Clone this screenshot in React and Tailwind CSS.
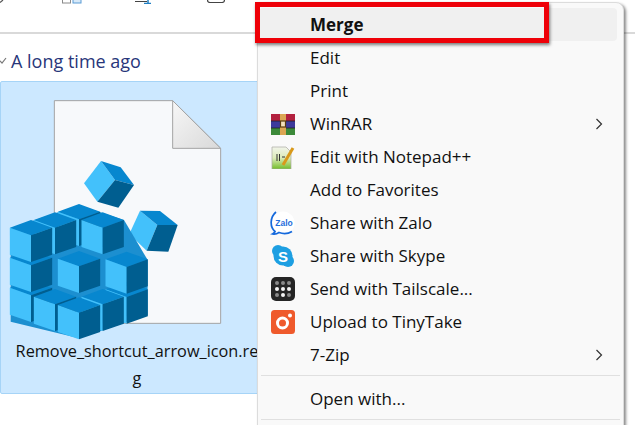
const menuItems = [
  { label: 'Edit' },
  { label: 'Print' },
  { label: 'WinRAR', icon: <WinRarIcon />, more: true },
  { label: 'Edit with Notepad++', icon: <NotepadIcon /> },
  { label: 'Add to Favorites' },
  { label: 'Share with Zalo', icon: <ZaloIcon /> },
  { label: 'Share with Skype', icon: <SkypeIcon /> },
  { label: 'Send with Tailscale...', icon: <TailscaleIcon /> },
  { label: 'Upload to TinyTake', icon: <TinyTakeIcon /> },
  { label: '7-Zip', more: true },
];

const stackCubes = [
  [380, 605], [93, 600], [308, 627], [165, 627], [237, 652],
  [93, 510], [237, 513], [380, 515],
  [237, 372], [165, 397], [308, 397], [93, 420],
];

function Cube({ x, y }) {
  const w = 63.5;
  return (
    <g>
      <polygon points={`${x - w},${y + 23} ${x},${y} ${x + w},${y + 23} ${x},${y + 46}`} fill="#0787cf" />
      <polygon points={`${x - w},${y + 23} ${x},${y + 46} ${x},${y + 126} ${x - w},${y + 104}`} fill="#43c1fb" />
      <polygon points={`${x},${y + 46} ${x + w},${y + 23} ${x + w},${y + 104} ${x},${y + 126}`} fill="#005e90" />
    </g>
  );
}

function RegistryIcon() {
  return (
    <svg className="block -ml-px -mt-[2px]" width="260" height="265" viewBox="0 0 780 795">
      <defs>
        <linearGradient id="fold" x1="0" y1="0" x2="1" y2="1">
          <stop offset="0" stopColor="#f7f7f7" />
          <stop offset="1" stopColor="#d9d9d9" />
        </linearGradient>
      </defs>
      <polygon points="163,62 518,62 662,205 662,730 163,730" fill="#f7f9fb" stroke="#a3a3a3" strokeWidth="3" />
      <polygon points="518,62 662,205 518,205" fill="url(#fold)" stroke="#a3a3a3" strokeWidth="3" />
      <polygon points="303,243 252,310 292,365 345,300" fill="#43c1fb" />
      <polygon points="303,243 362,262 402,315 345,300" fill="#0787cf" />
      <polygon points="345,300 402,315 355,383 292,365" fill="#005e90" />
      <polygon points="420,392 388,462 440,512 472,435" fill="#43c1fb" />
      <polygon points="420,392 480,393 533,435 472,435" fill="#0787cf" />
      <polygon points="472,435 533,435 505,515 440,512" fill="#005e90" />
      <polygon points="32,445 237,376 372,420 443,540 443,705 237,775 32,725" fill="#1c8fd0" />
      {stackCubes.map(([x, y]) => (
        <Cube key={`${x}-${y}`} x={x} y={y} />
      ))}
    </svg>
  );
}

function WinRarIcon() {
  return (
    <svg width="24" height="24" viewBox="0 0 24 24">
      <rect x="0" y="2" width="24" height="7" fill="#b3213f" />
      <rect x="0" y="9" width="24" height="7" fill="#3d3a9c" />
      <rect x="0" y="16" width="24" height="7" fill="#3c8a3a" />
      <path d="M0 9h24M0 16h24" stroke="#222" strokeWidth="0.800" />
      <rect x="9" y="2" width="6" height="21" fill="#dca653" />
      <rect x="9.500" y="9" width="5" height="6" fill="#f3e2bd" stroke="#5a3d10" strokeWidth="1.200" />
    </svg>
  );
}

function NotepadIcon() {
  return (
    <svg width="24" height="24" viewBox="0 0 24 24">
      <defs>
        <linearGradient id="pad" x1="0" y1="0" x2="0" y2="1">
          <stop offset="0" stopColor="#f1f4ea" />
          <stop offset="0.500" stopColor="#dcebb8" />
          <stop offset="1" stopColor="#73bd2a" />
        </linearGradient>
      </defs>
      <polygon points="1,2 15,2 20,7 20,24 1,24" fill="url(#pad)" stroke="#a9a9a0" strokeWidth="0.700" />
      <path d="M6 9v7M8.500 9v7M11 12h3" stroke="#333" strokeWidth="1" />
      <path d="M12 20L22 3" stroke="#d9991b" strokeWidth="3" />
    </svg>
  );
}

function ZaloIcon() {
  return (
    <svg width="26" height="24" viewBox="0 0 26 24" className="-ml-px">
      <circle cx="13" cy="12" r="11.500" fill="#fff" />
      <path d="M6 1C0 6-0.500 16 5 20.500c-.5 1-1.500 2-2.500 2.500 2.500 .5 5-.500 6.500-1.500 4 1.500 9 1.300 13-1" fill="none" stroke="#1569dc" strokeWidth="1.700" />
      <text x="14" y="14.500" textAnchor="middle" fontSize="8.500" fontWeight="700" fill="#1f6fdc" fontFamily="Liberation Sans, sans-serif">Zalo</text>
    </svg>
  );
}

function SkypeIcon() {
  return (
    <svg width="24" height="24" viewBox="0 0 24 24">
      <circle cx="12" cy="12" r="9.500" fill="#1d9fe2" />
      <circle cx="7" cy="7" r="6" fill="#1d9fe2" />
      <circle cx="17" cy="17" r="6" fill="#1d9fe2" />
      <text x="12" y="17.500" textAnchor="middle" fontSize="15" fontWeight="700" fill="#fff" fontFamily="Liberation Sans, sans-serif">S</text>
    </svg>
  );
}

function TailscaleIcon() {
  const dots = [
    [6, 6], [12, 6], [18, 6], [6, 12], [12, 12], [18, 12], [6, 18], [12, 18], [18, 18],
  ];
  return (
    <svg width="24" height="24" viewBox="0 0 24 24">
      <rect width="24" height="24" rx="5" fill="#252525" />
      {dots.map(([x, y], i) => (
        <circle key={i} cx={x} cy={y} r="2" fill={i < 3 || i === 6 || i === 8 ? '#8a8a8a' : '#f5f5f5'} />
      ))}
    </svg>
  );
}

function TinyTakeIcon() {
  return (
    <svg width="24" height="24" viewBox="0 0 24 24">
      <rect width="24" height="24" rx="3.500" fill="#ef5a2c" />
      <circle cx="11.500" cy="13" r="5" fill="none" stroke="#fff" strokeWidth="3" />
      <circle cx="19" cy="5.500" r="2" fill="#fff" />
    </svg>
  );
}

function MenuRow({ item }) {
  return (
    <div className="flex items-center h-[33px] pl-[12px] pr-[19px]">
      <span className="w-[39px] flex items-center">{item.icon}</span>
      <span className="flex-1 whitespace-nowrap">{item.label}</span>
      {item.more && (
        <svg width="8" height="12" viewBox="0 0 8 12" fill="none" stroke="#333" strokeWidth="1.200">
          <path d="M1.500 1l5 5-5 5" />
        </svg>
      )}
    </div>
  );
}

export default function App() {
  return (
    <div
      className="relative w-[635px] h-[425px] overflow-hidden bg-white text-[#111] text-[17px]"
      style={{ fontFamily: '"Open Sans", "Noto Sans", sans-serif' }}
    >
      {/* Explorer behind the menu */}
      <div className="h-[34px] border-b-2 border-[#d9d9d9] flex items-start">
        <svg className="w-[62px] shrink-0" width="62" height="3" viewBox="0 0 62 3" fill="none">
          <path d="M0 2.500L3 0" stroke="#555" strokeWidth="1.200" />
        </svg>
        <svg width="20" height="4" viewBox="0 0 20 4" fill="none">
          <rect x="0.500" y="-4" width="8" height="7" stroke="#8a8a8a" />
          <rect x="11" y="-4" width="8" height="7" fill="#d7e9f8" stroke="#5a9bd5" />
        </svg>
        <svg className="ml-[53px]" width="17" height="4" viewBox="0 0 17 4" fill="none">
          <path d="M0 1.500h12M9 3.500h7" stroke="#444" strokeWidth="1" />
          <path d="M13 0v3M9 3.500h7" stroke="#1f7fc4" strokeWidth="1.500" />
        </svg>
        <svg className="ml-[55px]" width="18" height="3" viewBox="0 0 18 3" fill="none">
          <path d="M0.500 0c0 1.500 1 2.500 2.500 2.500h12c1.500 0 2.500-1 2.500-2.500" stroke="#444" strokeWidth="1.200" />
        </svg>
      </div>

      <div className="flex items-center h-[47px] pt-[7px] gap-[3px] text-[#28367a] text-[18px]">
        <svg width="8" height="10" viewBox="0 0 8 10" fill="none" stroke="#777" strokeWidth="1.200">
          <path d="M-3 2l5 5 4-5" />
        </svg>
        <span>A long time ago</span>
      </div>

      <div className="w-[274px] h-[313px] bg-[#cce8ff] border border-[#a6d4f7] rounded-[2px]">
        <div className="h-[258px]">
          <RegistryIcon />
        </div>
        <div className="relative px-[14px] text-center leading-[27px] text-[16.3px] break-all">
          Remove_shortcut_arrow_icon.reg
        </div>
      </div>

      {/* Context menu */}
      <div className="absolute left-[257px] top-[2px] w-[367px] h-[440px] bg-[#f9f9f9] border border-[#dcdcdc] rounded-lg shadow-[2px_2px_3px_rgba(0,0,0,0.45)] pt-[5px] px-[1px]">
        <div className="flex items-center h-[33px] pl-[51px] mr-[5px] font-bold bg-[#f0f0f0] rounded">Merge</div>
        {menuItems.map((item) => (
          <MenuRow key={item.label} item={item} />
        ))}
        <div className="h-px bg-[#e0e0e0] mx-[2px] mt-[4px] mb-[6px]" />
        <MenuRow item={{ label: 'Open with...' }} />
        <div className="h-px bg-[#e0e0e0] mx-[2px] mt-[4px]" />
      </div>

      {/* Red highlight annotation */}
      <div className="absolute left-[255px] top-[2px] w-[294px] h-[41px] border-[5px] border-[#ee0008] shadow-[1px_2px_3px_rgba(0,0,0,0.5)]" />
    </div>
  );
}
